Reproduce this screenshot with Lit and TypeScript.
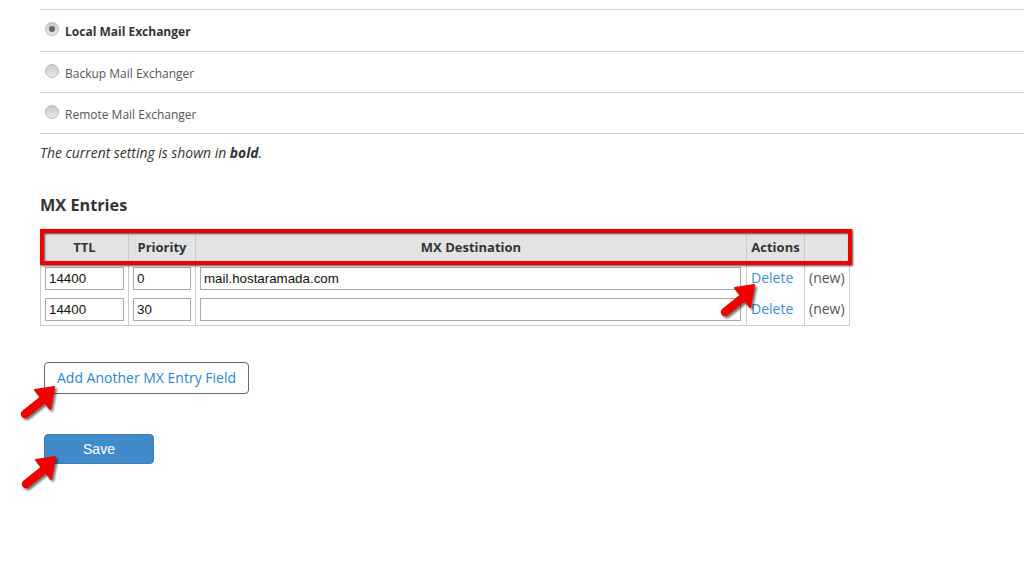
import { LitElement, html, css, svg } from "lit";
import { customElement } from "lit/decorators.js";

const arrow = (left: number, top: number) => html`<svg class="arrow" style="left:${left}px;top:${top}px" width="40" height="38" viewBox="0 0 40 38">
  ${svg`<g fill="#f00000" stroke="#f00000" stroke-linejoin="round"><path d="M35 3 L16 6 L31 25 Z" stroke-width="2"/><path d="M26 14 L6 30" stroke-width="8.5" stroke-linecap="round" fill="none"/></g>`}
</svg>`;

@customElement("app-root")
export class AppRoot extends LitElement {
  static styles = css`
    :host { display: block; position: relative; width: 1024px; height: 576px; overflow: hidden; background: #fff; font-family: "Open Sans", sans-serif; color: #333; font-size: 12px; }
    .page { padding: 9px 0 0 40px; display: flex; flex-direction: column; align-items: flex-start; }
    .opts { width: 984px; border-top: 1px solid #ccc; }
    .opt { display: flex; align-items: center; gap: 6px; height: 38px; padding: 2px 0 0 5px; border-bottom: 1px solid #ccc; }
    .opt.first { height: 39px; }
    .radio { width: 12px; height: 12px; border-radius: 50%; border: 1px solid #bbb; background: linear-gradient(#c8c8c8, #e8e8e8); display: flex; align-items: center; justify-content: center; transform: translateY(-2px); flex: none; }
    .first .radio { transform: translateY(-3px); }
    .radio i { width: 6px; height: 6px; border-radius: 50%; background: #666; }
    .opt b { font-weight: 700; }
    .opt span { color: #555; }
    .note { font-style: italic; font-size: 13.9px; line-height: 19px; margin: 9px 0 0; color: #333; }
    .note b { font-weight: 700; }
    h2 { font-size: 16.25px; line-height: 22px; font-weight: 700; margin: 32px 0 0; color: #333; }
    table { border-collapse: collapse; table-layout: fixed; width: 809px; margin-top: 17px; font-size: 14px; }
    th { background: #e3e3e3; border: 1px solid #ccc; height: 30px; padding: 0 0 3px; box-sizing: border-box; font-size: 13px; font-weight: 700; color: #333; }
    td { border: 1px solid #ccc; border-width: 0 1px; height: 31px; padding: 0 4px; box-sizing: border-box; color: #444; vertical-align: top; line-height: 27px; }
    tr.last td { border-bottom-width: 1px; }
    td.ctl { padding: 3px 4px 0; }
    td.wide { padding-right: 5px; }
    td a { color: #3d8fd1; text-decoration: none; }
    .new { color: #555; font-size: 14px; }
    input { display: block; box-sizing: border-box; width: 100%; height: 23px; border: 1px solid #aaa; padding: 0 3px; font: 13.33px "Liberation Sans", sans-serif; color: #111; background: #fff; outline: none; }
    .add { margin: 36px 0 0 4px; width: 205px; height: 32px; box-sizing: border-box; border: 1px solid #666; border-radius: 4px; background: #fff; color: #2a87c8; font: 14px "Open Sans", sans-serif; padding: 0 0 2px; }
    .save { margin: 40px 0 0 4px; width: 110px; height: 30px; box-sizing: border-box; border: 1px solid #3a7fb8; border-radius: 4px; background: #428bca; color: #fff; font: 14px "Liberation Sans", sans-serif; padding: 0; }
    .highlight { position: absolute; left: 40px; top: 229px; width: 812px; height: 36px; box-sizing: border-box; border: 4px solid #f00000; box-shadow: 1px 1px 2px rgba(0,0,0,.7), inset 1px 1px 2px rgba(0,0,0,.6); }
    .arrow { position: absolute; filter: drop-shadow(2px 2px 1px rgba(0,0,0,.55)); }
  `;

  private row(ttl: string, pri: string, dest: string, cls = "") {
    return html`<tr class=${cls}>
      <td class="ctl"><input .value=${ttl} /></td>
      <td class="ctl"><input .value=${pri} /></td>
      <td class="ctl wide"><input .value=${dest} /></td>
      <td><a href="#">Delete</a></td>
      <td class="new">(new)</td>
    </tr>`;
  }

  render() {
    return html`
      <div class="page">
        <div class="opts">
          <div class="opt first"><div class="radio"><i></i></div><b>Local Mail Exchanger</b></div>
          <div class="opt"><div class="radio"></div><span>Backup Mail Exchanger</span></div>
          <div class="opt"><div class="radio"></div><span>Remote Mail Exchanger</span></div>
        </div>
        <p class="note">The current setting is shown in <b>bold</b>.</p>
        <h2>MX Entries</h2>
        <table>
          <colgroup><col style="width:88px" /><col style="width:67px" /><col style="width:551px" /><col style="width:58px" /><col style="width:45px" /></colgroup>
          <thead><tr><th>TTL</th><th>Priority</th><th>MX Destination</th><th>Actions</th><th></th></tr></thead>
          <tbody>
            ${this.row("14400", "0", "mail.hostaramada.com")}
            ${this.row("14400", "30", "", "last")}
          </tbody>
        </table>
        <button class="add">Add Another MX Entry Field</button>
        <button class="save">Save</button>
      </div>
      <div class="highlight"></div>
      ${arrow(719, 282)}
      ${arrow(19, 384)}
      ${arrow(20, 454)}
    `;
  }
}
